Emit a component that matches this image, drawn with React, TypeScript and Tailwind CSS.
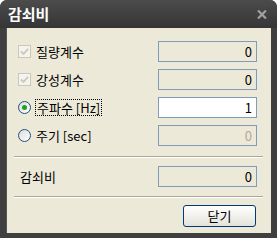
const font = { fontFamily: '"Noto Sans CJK KR", "Noto Sans", sans-serif' };

function Check() {
  return (
    <span className="flex h-[13px] w-[13px] items-center justify-center border border-[#cac8bb] bg-[#f4f3ee]">
      <svg width="9" height="9" viewBox="0 0 9 9">
        <path d="M1 4.5 L3.5 7 L8 1.8" fill="none" stroke="#cac8bb" strokeWidth="1.8" />
      </svg>
    </span>
  );
}

function Radio({ on }: { on?: boolean }) {
  return (
    <span className="flex h-[13px] w-[13px] items-center justify-center rounded-full border border-[#1c5180] bg-gradient-to-br from-[#dcdcd6] to-white">
      {on && <span className="h-[5px] w-[5px] rounded-full bg-[#21a121]" />}
    </span>
  );
}

function Field({ value, white, dim }: { value: string; white?: boolean; dim?: boolean }) {
  return (
    <div
      className={`flex h-[21px] w-[99px] items-center justify-end border border-[#7f9db9] pr-[4px] text-[13px] ${
        white ? "bg-white" : "bg-[#ece9d8]"
      } ${dim ? "text-[#aca899]" : "text-black"}`}
    >
      {value}
    </div>
  );
}

function Sep() {
  return (
    <div className="ml-[7px] w-[249px]">
      <div className="h-px bg-[#aca899]" />
      <div className="h-px bg-white" />
    </div>
  );
}

export default function App() {
  return (
    <div className="h-[241px] w-[277px] bg-white" style={font}>
      <div className="flex h-[238px] flex-col rounded-t-[7px] bg-[#3f3f3f]">
        <div className="flex h-[28px] items-center justify-between rounded-t-[7px] bg-gradient-to-b from-[#4c4c4c] to-[#353535] pl-[8px] pr-[10px]">
          <span className="text-[15px] font-bold text-white">감쇠비</span>
          <svg width="10" height="9" viewBox="0 0 10 9">
            <path d="M1 0.5 L9 8.5 M9 0.5 L1 8.5" stroke="#a0a0a0" strokeWidth="2.2" />
          </svg>
        </div>
        <div className="mx-[6px] flex h-[205px] flex-col border-l border-[#555] bg-[#ece9d8] pt-[13px] text-[13px] text-black">
          <div className="flex flex-col gap-[7px] pl-[11px] pr-[14px]">
            <div className="flex h-[21px] items-center justify-between">
              <div className="flex items-center gap-[5px]">
                <Check />
                <span>질량계수</span>
              </div>
              <Field value="0" />
            </div>
            <div className="flex h-[21px] items-center justify-between">
              <div className="flex items-center gap-[5px]">
                <Check />
                <span>강성계수</span>
              </div>
              <Field value="0" />
            </div>
            <div className="flex h-[21px] items-center justify-between">
              <div className="flex items-center gap-[4px]">
                <Radio on />
                <span className="border border-dotted border-black px-px leading-[15px]">주파수 [Hz]</span>
              </div>
              <Field value="1" white />
            </div>
            <div className="flex h-[21px] items-center justify-between">
              <div className="flex items-center gap-[5px]">
                <Radio />
                <span>주기 [sec]</span>
              </div>
              <Field value="0" dim />
            </div>
          </div>
          <div className="mt-[10px]">
            <Sep />
          </div>
          <div className="mt-[8px] flex h-[21px] items-center justify-between pl-[13px] pr-[14px]">
            <span>감쇠비</span>
            <Field value="0" />
          </div>
          <div className="mt-[9px]">
            <Sep />
          </div>
          <div className="mt-[7px] flex justify-end pr-[15px]">
            <button className="flex h-[22px] w-[73px] items-center justify-center rounded-[3px] border border-[#003c74] bg-gradient-to-b from-white to-[#e3e2da] text-[13px]">
              닫기
            </button>
          </div>
        </div>
      </div>
    </div>
  );
}
